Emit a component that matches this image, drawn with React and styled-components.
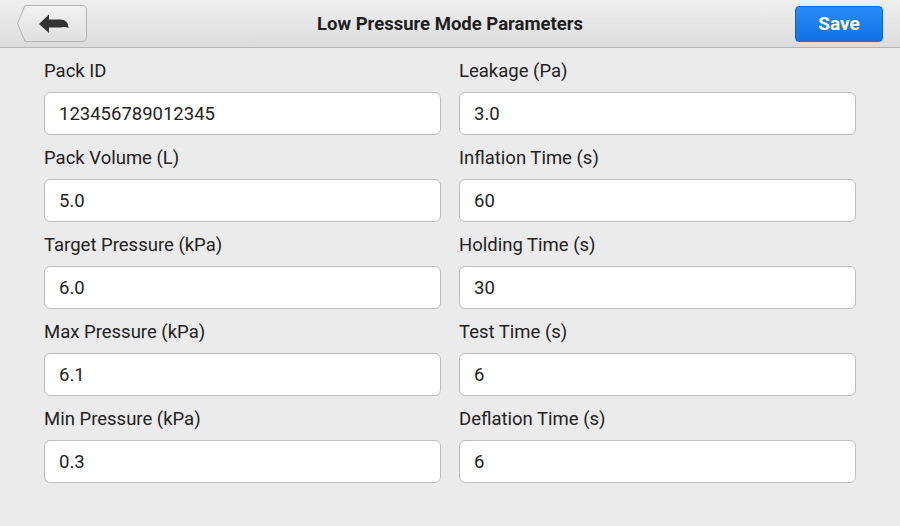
import React from "react";
import styled, { createGlobalStyle } from "styled-components";

const Global = createGlobalStyle`
  html, body { margin: 0; padding: 0; }
  body {
    background: #ebebeb;
    font-family: Roboto, "Noto Sans", "Liberation Sans", sans-serif;
    color: #222;
  }
`;

const Page = styled.div`
  width: 900px;
  height: 526px;
  background: #ebebeb;
  display: flex;
  flex-direction: column;
`;

const Header = styled.header`
  height: 47px;
  flex: none;
  display: flex;
  align-items: center;
  justify-content: space-between;
  padding: 0 17px 0 17px;
  background: linear-gradient(#efefef, #dcdcdc);
  border-bottom: 1px solid #b5b5b5;
  position: relative;
`;

const Title = styled.h1`
  position: absolute;
  left: 0;
  right: 0;
  text-align: center;
  margin: 0;
  font-size: 18.5px;
  font-weight: 700;
  color: #1e1e1e;
  pointer-events: none;
`;

const BackButton = styled.button`
  width: 70px;
  height: 37px;
  padding: 0;
  border: none;
  background: none;
  cursor: pointer;
  svg { display: block; }
`;

const SaveButton = styled.button`
  width: 88px;
  height: 36px;
  border-radius: 4px;
  border: 1px solid #0b63c9;
  background: linear-gradient(#2a8cf6, #0f72e6);
  color: #fff;
  font-family: Roboto, "Liberation Sans", sans-serif;
  font-size: 19px;
  font-weight: 700;
  cursor: pointer;
`;

const Form = styled.div`
  display: grid;
  grid-template-columns: 397px 397px;
  column-gap: 18px;
  row-gap: 12px;
  padding: 12px 44px 0 44px;
`;

const Field = styled.div`
  display: flex;
  flex-direction: column;
  gap: 10px;
`;

const Label = styled.label`
  font-size: 18.5px;
  line-height: 22px;
  color: #222;
`;

const Input = styled.input`
  box-sizing: border-box;
  height: 43px;
  width: 100%;
  border: 1px solid #bdbdbd;
  border-radius: 6px;
  background: #fff;
  padding: 0 14px;
  font-family: Roboto, "Noto Sans", "Liberation Sans", sans-serif;
  font-size: 18.5px;
  color: #222;
  outline: none;
`;

const fields = [
  ["Pack ID", "123456789012345"],
  ["Leakage (Pa)", "3.0"],
  ["Pack Volume (L)", "5.0"],
  ["Inflation Time (s)", "60"],
  ["Target Pressure (kPa)", "6.0"],
  ["Holding Time (s)", "30"],
  ["Max Pressure (kPa)", "6.1"],
  ["Test Time (s)", "6"],
  ["Min Pressure (kPa)", "0.3"],
  ["Deflation Time (s)", "6"],
];

function BackIcon() {
  return (
    <svg width="70" height="37" viewBox="0 0 70 37">
      <defs>
        <linearGradient id="bk" x1="0" y1="0" x2="0" y2="1">
          <stop offset="0" stopColor="#f3f3f3" />
          <stop offset="1" stopColor="#dfdfdf" />
        </linearGradient>
      </defs>
      <path
        d="M8 0.5 L65 0.5 Q69.5 0.5 69.5 5 L69.5 32 Q69.5 36.5 65 36.5 L8 36.5 L0.5 18.5 Z"
        fill="url(#bk)"
        stroke="#b3b3b3"
        strokeWidth="1"
      />
      <path
        d="M22 19 L32 9.5 L32 14.5 L43 14.5 Q51.5 14.5 51.5 23 Q48.5 21.5 43 22.5 L32 22.5 L32 28 Z"
        fill="#333"
      />
    </svg>
  );
}

export default function App() {
  return (
    <>
      <Global />
      <Page>
        <Header>
          <BackButton aria-label="Back">
            <BackIcon />
          </BackButton>
          <Title>Low Pressure Mode Parameters</Title>
          <SaveButton>Save</SaveButton>
        </Header>
        <Form>
          {fields.map(([label, value]) => (
            <Field key={label}>
              <Label>{label}</Label>
              <Input defaultValue={value} />
            </Field>
          ))}
        </Form>
      </Page>
    </>
  );
}
